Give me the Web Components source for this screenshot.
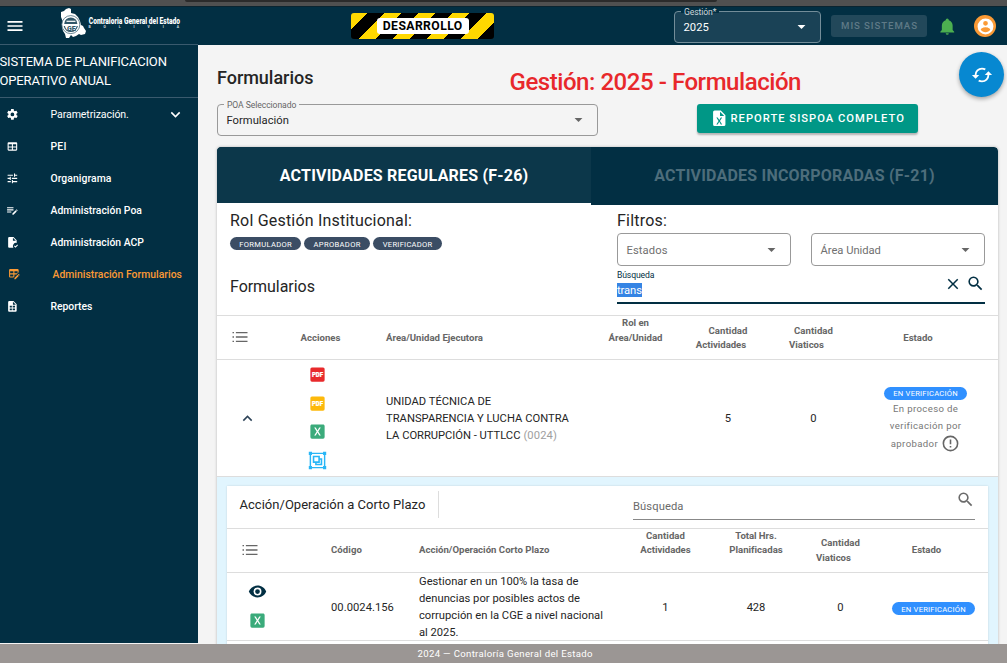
<!DOCTYPE html>
<html lang="es"><head><meta charset="utf-8"><title>Sistema de Planificacion Operativo Anual</title>
<style>html,body{margin:0;height:100%;overflow:hidden}body{font-family:Roboto,sans-serif;background:#f4f4f4}</style></head>
<body><poa-app></poa-app>
<script>
const ctx=document.createElement('canvas').getContext('2d');
function define(name,css,html,setup){
  customElements.define(name,class extends HTMLElement{
    constructor(){super();this.attachShadow({mode:'open'}).innerHTML='<style>*{box-sizing:border-box}:host{box-sizing:border-box}'+css+'</style>'+(typeof html==='function'?'':html);this.tpl=html;}
    connectedCallback(){if(this.ready)return;this.ready=true;
      if(typeof this.tpl==='function')this.shadowRoot.innerHTML+=this.tpl(this);
      if(setup)setup(this);}
  });
}
const P={
menu:'M3,6H21V8H3V6M3,11H21V13H3V11M3,16H21V18H3V16Z',
cog:'M12,15.5A3.5,3.5 0 0,1 8.5,12A3.5,3.5 0 0,1 12,8.5A3.5,3.5 0 0,1 15.5,12A3.5,3.5 0 0,1 12,15.5M19.43,12.97C19.47,12.65 19.5,12.33 19.5,12C19.5,11.67 19.47,11.34 19.43,11L21.54,9.37C21.73,9.22 21.78,8.95 21.66,8.73L19.66,5.27C19.54,5.05 19.27,4.96 19.05,5.05L16.56,6.05C16.04,5.66 15.5,5.32 14.87,5.07L14.5,2.42C14.46,2.18 14.25,2 14,2H10C9.75,2 9.54,2.18 9.5,2.42L9.13,5.07C8.5,5.32 7.96,5.66 7.44,6.05L4.95,5.05C4.73,4.96 4.46,5.05 4.34,5.27L2.34,8.73C2.21,8.95 2.27,9.22 2.46,9.37L4.57,11C4.53,11.34 4.5,11.67 4.5,12C4.5,12.33 4.53,12.65 4.57,12.97L2.46,14.63C2.27,14.78 2.21,15.05 2.34,15.27L4.34,18.73C4.46,18.95 4.73,19.03 4.95,18.95L7.44,17.94C7.96,18.34 8.5,18.68 9.13,18.93L9.5,21.58C9.54,21.82 9.75,22 10,22H14C14.25,22 14.46,21.82 14.5,21.58L14.87,18.93C15.5,18.67 16.04,18.34 16.56,17.94L19.05,18.95C19.27,19.03 19.54,18.95 19.66,18.73L21.66,15.27C21.78,15.05 21.73,14.78 21.54,14.63L19.43,12.97Z',
down:'M7.41,8.58L12,13.17L16.59,8.58L18,10L12,16L6,10L7.41,8.58Z',
up:'M7.41,15.41L12,10.83L16.59,15.41L18,14L12,8L6,14L7.41,15.41Z',
caret:'M7,10L12,15L17,10H7Z',
table:'M5,4H19A2,2 0 0,1 21,6V18A2,2 0 0,1 19,20H5A2,2 0 0,1 3,18V6A2,2 0 0,1 5,4M5,8V12H11V8H5M13,8V12H19V8H13M5,14V18H11V14H5M13,14V18H19V14H13Z',
tune:'M3,17V19H9V17H3M3,5V7H13V5H3M13,21V19H21V17H13V15H11V21H13M7,9V11H3V13H7V15H9V9H7M21,13V11H11V13H21M15,9H17V7H21V5H17V3H15V9Z',
playlist:'M2,6V8H14V6H2M2,10V12H14V10H2M20.04,10.13C19.9,10.13 19.76,10.19 19.65,10.3L18.65,11.3L20.7,13.35L21.7,12.35C21.92,12.14 21.92,11.79 21.7,11.58L20.42,10.3C20.31,10.19 20.18,10.13 20.04,10.13M18.07,11.88L12,17.94V20H14.06L20.12,13.93L18.07,11.88M2,14V16H10V14H2Z',
filecheck:'M14,2H6A2,2 0 0,0 4,4V20A2,2 0 0,0 6,22H13.8A6,6 0 0,1 20,13V8L14,2M13,9V3.5L18.5,9H13M17.75,22L15,19L16.16,17.84L17.75,19.43L21.34,15.84L22.5,17.25L17.75,22Z',
tableedit:'M21.7,13.35L20.7,14.35L18.65,12.3L19.65,11.3C19.86,11.08 20.21,11.08 20.42,11.3L21.7,12.58C21.92,12.79 21.92,13.14 21.7,13.35M12,18.94L18.07,12.88L20.12,14.93L14.06,21H12V18.94M4,2H18A2,2 0 0,1 20,4V8.17L16.17,12H12V16.17L10.17,18H4A2,2 0 0,1 2,16V4A2,2 0 0,1 4,2M4,6V10H10V6H4M12,6V10H18V6H12M4,12V16H10V12H4Z',
filetable:'M14,2H6A2,2 0 0,0 4,4V20A2,2 0 0,0 6,22H18A2,2 0 0,0 20,20V8L14,2M11,19H7V17H11V19M11,16H7V14H11V16M17,19H12.5V17H17V19M17,16H12.5V14H17V16M17,13H12.5V11H17V13M11,13H7V11H11V13M13,9V3.5L18.5,9H13Z',
bell:'M21,19V20H3V19L5,17V11C5,7.9 7.03,5.17 10,4.29C10,4.19 10,4.1 10,4A2,2 0 0,1 12,2A2,2 0 0,1 14,4C14,4.1 14,4.19 14,4.29C16.97,5.17 19,7.9 19,11V17L21,19M14,21A2,2 0 0,1 12,23A2,2 0 0,1 10,21',
account:'M12,19.2C9.5,19.2 7.29,17.92 6,16C6.03,14 10,12.9 12,12.9C14,12.9 17.97,14 18,16C16.71,17.92 14.5,19.2 12,19.2M12,5A3,3 0 0,1 15,8A3,3 0 0,1 12,11A3,3 0 0,1 9,8A3,3 0 0,1 12,5M12,2A10,10 0 0,0 2,12A10,10 0 0,0 12,22A10,10 0 0,0 22,12C22,6.47 17.5,2 12,2Z',
search:'M9.5,3A6.5,6.5 0 0,1 16,9.5C16,11.11 15.41,12.59 14.44,13.73L14.71,14H15.5L20.5,19L19,20.5L14,15.5V14.71L13.73,14.44C12.59,15.41 11.11,16 9.5,16A6.5,6.5 0 0,1 3,9.5A6.5,6.5 0 0,1 9.5,3M9.5,5C7,5 5,7 5,9.5C5,12 7,14 9.5,14C12,14 14,12 14,9.5C14,7 12,5 9.5,5Z',
close:'M19,6.41L17.59,5L12,10.59L6.41,5L5,6.41L10.59,12L5,17.59L6.41,19L12,13.41L17.59,19L19,17.59L13.41,12L19,6.41Z',
eye:'M12,9A3,3 0 0,0 9,12A3,3 0 0,0 12,15A3,3 0 0,0 15,12A3,3 0 0,0 12,9M12,17A5,5 0 0,1 7,12A5,5 0 0,1 12,7A5,5 0 0,1 17,12A5,5 0 0,1 12,17M12,4.5C7,4.5 2.73,7.61 1,12C2.73,16.39 7,19.5 12,19.5C17,19.5 21.27,16.39 23,12C21.27,7.61 17,4.5 12,4.5Z',
alert:'M11,15H13V17H11V15M11,7H13V13H11V7M12,2C6.47,2 2,6.5 2,12A10,10 0 0,0 12,22A10,10 0 0,0 22,12A10,10 0 0,0 12,2M12,20A8,8 0 0,1 4,12A8,8 0 0,1 12,4A8,8 0 0,1 20,12A8,8 0 0,1 12,20Z',
list:'M2,5.2H4V7H2V5.2M2,11.1H4V12.9H2V11.1M2,17H4V18.8H2V17M6.5,5.2H22V7H6.5V5.2M6.5,11.1H22V12.9H6.5V11.1M6.5,17H22V18.8H6.5V17Z',
cached:'M19,8L15,12H18A6,6 0 0,1 12,18C11,18 10.03,17.75 9.2,17.3L7.74,18.76C8.97,19.54 10.43,20 12,20A8,8 0 0,0 20,12H23M6,12A6,6 0 0,1 12,6C13,6 13.97,6.25 14.8,6.7L16.26,5.24C15.03,4.46 13.57,4 12,4A8,8 0 0,0 4,12H1L5,16L9,12',
excelfile:'M14,2H6A2,2 0 0,0 4,4V20A2,2 0 0,0 6,22H18A2,2 0 0,0 20,20V8L14,2M15.8,20H14L12,16.6L10,20H8.2L11.1,15.5L8.2,11H10L12,14.4L14,11H15.8L12.9,15.5L15.8,20M13,9V3.5L18.5,9H13Z',
excel:'M16.2,17H14.2L12,13.2L9.8,17H7.8L11,12L7.8,7H9.8L12,10.8L14.2,7H16.2L13,12M19,3H5C3.89,3 3,3.89 3,5V19A2,2 0 0,0 5,21H19A2,2 0 0,0 21,19V5C21,3.89 20.1,3 19,3Z'};
const X={
pdf:'<rect x="3" y="3" width="18" height="18" rx="2"/><text x="12" y="14.8" fill="#fff" font-family="Roboto" font-weight="900" font-size="8" text-anchor="middle" stroke="#fff" stroke-width=".3" textLength="14" lengthAdjust="spacingAndGlyphs">PDF</text>',
group:'<g fill="none" stroke="currentColor" stroke-width="1.8"><path d="M3,3H21V21H3Z"/><path d="M7,7H14V14H7ZM14,10H17V17H10V14" stroke-width="2"/></g><path d="M1,1H5V5H1ZM19,1H23V5H19ZM1,19H5V23H1ZM19,19H23V23H19Z"/>'};
// One drawing from the icon set
define('ui-icon',':host{display:block;flex:none}svg{display:block;fill:currentColor}',e=>{const n=e.getAttribute('name'),s=e.getAttribute('size')||24;
 return `<svg width="${s}" height="${s}" viewBox="0 0 24 24">${X[n]||`<path fill-rule="evenodd" d="${P[n]}"/>`}</svg>`});
// A single line of text, tracked to the width given in w
define('ui-text',':host{display:inline-block;white-space:nowrap;flex:none}','<slot></slot>',e=>{
 const s=e.getAttribute('s')||11.2,wt=e.getAttribute('b')||400,w=+e.getAttribute('w')-.6,t=e.textContent;
 e.style.fontSize=s+'px';e.style.fontWeight=wt;
 if(w>0){ctx.font=`${wt} ${s}px Roboto`;const ls=(w-ctx.measureText(t).width)/Math.max(1,t.length-1);e.style.letterSpacing=ls.toFixed(3)+'px';e.style.marginRight=(-ls).toFixed(3)+'px';}
});
define('ui-chip',':host{display:flex;height:13px;border-radius:7px;justify-content:center;color:#fff;background:var(--chip,#3b4d64);flex:none;font-size:0}span{display:block;line-height:13px;padding-top:var(--drop,.6px)}','<span><slot></slot></span>');
define('ui-select',`:host{display:block;position:relative;border:1px solid var(--line,#999);border-radius:4px;color:#252525}
.in{height:100%;display:flex;align-items:center;justify-content:space-between;padding:0 9px 0 8.5px}.in div{font-size:0;line-height:16px;padding-top:5px}
.lb{position:absolute;left:6px;top:-5px;line-height:10px;font-size:0;padding:0 3px;color:var(--label,#666);background:var(--bg,#f4f4f4)}ui-icon{color:var(--caret,#666);margin-top:-1px}`,
 '<div class="in"><div><slot></slot></div><ui-icon name="caret" size="19"></ui-icon></div><div class="lb"><slot name="label"></slot></div>');
define('cge-logo',':host{display:block;width:122px;height:34px}svg{display:block;overflow:visible}',`<svg width="122" height="34" viewBox="0 0 122 34">
<path fill="#fff" d="M2 5L5 4L7 2L10 1L12 2L12 6L16 7L19 10L21 14L22 18L24 19L25 21L27 24L26 27L22 28L20 27L17 29L14 30L12 28L10 31L7 31L6 27L4 24L3 20L4 15L2 10Z"/>
<circle cx="11.8" cy="17.6" r="9" fill="#fff" stroke="#45697a" stroke-width=".8"/><path d="M5.2 17A6.6 6.6 0 0 1 18.4 17Z" fill="#315769"/><path d="M7.5 14.3H16.5" stroke="#fff" stroke-width="1.2"/><path d="M5.3 19A6.6 6.6 0 0 0 18.3 19" fill="none" stroke="#315769" stroke-width="1.3"/>
<text x="12.3" y="23.6" text-anchor="middle" font-family="Roboto" font-size="7" font-weight="900" fill="#315769">GE</text>
<text x="29.8" y="16.7" font-family="Roboto" font-size="9.6" font-weight="900" fill="#fff" textLength="91.2" lengthAdjust="spacingAndGlyphs">Contraloria General del Estado</text>
<text fill="#c7d2d8" font-family="Roboto" font-size="3.4" font-weight="900" x="29.5" y="21" textLength="90.5">BOLIVIA</text></svg>`);
define('top-bar',`:host{display:flex;height:39px;background:#022f43;color:#fff;align-items:flex-start;border-top:1px solid #0a2430}
.menu{margin:9px 0 0 5px}cge-logo{margin:0 0 0 34px}
.dev{margin:6px 0 0 170px;width:143px;height:26px;border-radius:3px;background:repeating-linear-gradient(-45deg,#000 0 12px,#ffd800 12px 24px);display:flex;justify-content:center;align-items:center}
.dev div{background:#fff;color:#000;width:92px;height:16px;border-radius:3px;line-height:16px;text-align:center;font-size:0}
ui-select{width:147px;height:32px;margin:4px 0 0 180px;background:#1a4256;color:#fff;--line:#738d99;--label:#d0d8dc;--bg:linear-gradient(#022f43 50%,#1a4256 50%);--caret:#fff}
.mis{margin:8px 0 0 10px;width:96px;height:22px;border-radius:3px;background:#22485a;color:#5f7a87;line-height:21.5px;text-align:center;font-size:0}
.bell{margin:10px 0 0 11px;color:#4caf50}.ac{margin:8px 0 0 17.5px;width:22px;height:22px;border-radius:50%;background:#fb9a35;display:grid;place-items:center}`,
`<ui-icon class="menu" name="menu" size="20"></ui-icon><cge-logo></cge-logo><div class="dev"><div><ui-text s="12.2" b="700" w="80">DESARROLLO</ui-text></div></div>
<ui-select><ui-text w="26">2025</ui-text><ui-text slot="label" s="8.6" w="33">Gestión*</ui-text></ui-select><div class="mis"><ui-text s="9.6" b="500" w="76.5">MIS SISTEMAS</ui-text></div>
<ui-icon class="bell" name="bell" size="18.5"></ui-icon><div class="ac"><ui-icon name="account" size="19"></ui-icon></div>`);
define('side-item',':host{display:flex;align-items:center;height:32px;padding-left:6px}ui-icon{width:44.5px}:host([active]){color:#fb9a35;padding-left:8px}.more{width:auto;margin-left:auto;margin-right:13px}',
 e=>`<ui-icon name="${e.getAttribute('icon')}" size="12.8"></ui-icon><slot></slot>${e.hasAttribute('more')?'<ui-icon class="more" name="down" size="19"></ui-icon>':''}`);
define('side-nav',`:host{display:block;background:#022f43;color:#fff;overflow:hidden}.t{height:54px;border:1px solid #3a5a6e;border-width:1px 0;padding-top:7px;line-height:19px}.t ui-text{display:block;margin-left:-.5px}`,
`<div class="t"><ui-text s="13" w="168">SISTEMA DE PLANIFICACION</ui-text><ui-text s="13" w="112">OPERATIVO ANUAL</ui-text></div>
<side-item icon="cog" more><ui-text s="10.6" w="79">Parametrización.</ui-text></side-item>
<side-item icon="table"><ui-text s="10.4" b="500" w="16.5">PEI</ui-text></side-item>
<side-item icon="tune"><ui-text s="10.4" b="500" w="61.5">Organigrama</ui-text></side-item>
<side-item icon="playlist"><ui-text s="10.4" b="500" w="92">Administración Poa</ui-text></side-item>
<side-item icon="filecheck"><ui-text s="10.4" b="500" w="94">Administración ACP</ui-text></side-item>
<side-item icon="tableedit" active><ui-text s="10.4" b="500" w="130">Administración Formularios</ui-text></side-item>
<side-item icon="filetable"><ui-text s="10.4" b="500" w="42.5">Reportes</ui-text></side-item>`);
define('page-head',`:host{display:grid;grid-template-columns:381px 1fr;height:102px;color:#252525}.l h1{margin:0;font:inherit;line-height:24px;height:59px;padding-top:21px}
ui-select{height:32px}.r{display:flex;flex-direction:column}.r .g{color:#e8282b;line-height:30px;height:30px;margin:22px 0 0 -88.5px}
.btn{margin:7px 0 0 99px;width:221px;height:29px;border-radius:3px;background:#009786;color:#fff;display:flex;align-items:center;padding-left:13px;gap:2px;box-shadow:0 2px 2px #0004}`,
`<div class="l"><h1><ui-text s="18" b="500" w="97">Formularios</ui-text></h1><ui-select><ui-text w="63">Formulación</ui-text><ui-text slot="label" s="8.6" w="70">POA Seleccionado</ui-text></ui-select></div>
<div class="r"><div class="g"><ui-text s="24" b="500" w="292.5">Gestión: 2025 - Formulación</ui-text></div><div class="btn"><ui-icon name="excelfile" size="18.5"></ui-icon><ui-text s="11.2" b="500" w="174">REPORTE SISPOA COMPLETO</ui-text></div></div>`);
define('form-tabs',`:host{display:grid;grid-template-columns:374px 1fr;grid-template-rows:58px;height:58px;background:#022f43;line-height:57px;text-align:center;border-radius:4px 4px 0 0;overflow:hidden}
.a{color:#fff;background:#0c374a;border-bottom:2px solid #fff;height:58px}.b{color:#4d6d7b}`,
`<div class="a"><ui-text s="16" b="700" w="249">ACTIVIDADES REGULARES (F-26)</ui-text></div><div class="b"><ui-text s="16" b="700" w="281">ACTIVIDADES INCORPORADAS (F-21)</ui-text></div>`);
define('form-filters',`:host{display:grid;grid-template-columns:387px 368px;height:111px;padding-left:13px;border-bottom:1px solid #ddd;color:#252525}
.h{line-height:20px;padding-top:6px;height:28px}.chips{display:flex;gap:3px;padding-top:4px;--drop:1.2px}.f{line-height:20px;margin-top:26.5px}
.s{display:grid;grid-template-columns:174px 174px;gap:20px}.s ui-select{height:33px;color:#707070;--bg:none}
.q{margin-top:3px;height:35px;border-bottom:2px solid #022f43;display:flex;gap:4px;color:#022f43;font-size:0}.q>div{flex:1}.lb{line-height:13px;height:11px}.v{height:14px;margin-top:3px}.v span{display:block;background:#3584e4;color:#fff;height:14px;line-height:15px;width:25px}.q ui-icon{margin-top:5.5px}`,
`<div><div class="h"><ui-text s="16" w="182.5">Rol Gestión Institucional:</ui-text></div><div class="chips"><ui-chip style="width:71px"><ui-text s="7.6" w="53">FORMULADOR</ui-text></ui-chip><ui-chip style="width:66px"><ui-text s="7.6" w="47.5">APROBADOR</ui-text></ui-chip><ui-chip style="width:69px"><ui-text s="7.6" w="50">VERIFICADOR</ui-text></ui-chip></div><div class="f"><ui-text s="16" w="85.5">Formularios</ui-text></div></div>
<div><div class="h"><ui-text s="16" w="50.5">Filtros:</ui-text></div><div class="s"><ui-select><ui-text w="41.5">Estados</ui-text></ui-select><ui-select><ui-text w="61">Área Unidad</ui-text></ui-select></div>
<div class="q"><div><div class="lb"><ui-text s="8.6" w="38">Búsqueda</ui-text></div><div class="v"><span><ui-text w="25.5">trans</ui-text></span></div></div><ui-icon name="close" size="18"></ui-icon><ui-icon name="search" size="19" style="margin-top:5px"></ui-icon></div></div>`);
const tcss=`.th,.tr{display:grid;border-bottom:1px solid #ddd;align-items:center;justify-items:center}.th{height:44px;color:#666;line-height:14px}.tr{color:#252525;line-height:17px}
.c{display:flex;flex-direction:column;align-items:center}.l{justify-self:start}.sub{margin-left:-14px}`;
define('action-detail',tcss+`:host{display:block;background:#fff;box-shadow:0 0 2px #0002;flex:1}.top{display:grid;grid-template-columns:211px 1fr;height:43px;border-bottom:1px solid #ddd;color:#252525}
.t{border-right:1px solid #ddd;height:27px;margin-top:5px;width:212px;padding-left:12.5px;line-height:26px}.s{margin-left:195px;width:342px;height:34px;border-bottom:1px solid #888;display:flex;justify-content:space-between;color:#6a6a6a;line-height:15px;padding:12.5px 0 0}
.s ui-icon{margin-top:-8.5px}
.th,.tr{grid-template-columns:60px 28px 88px 216px 93px 88px 81px 107px}.i{display:flex;flex-direction:column;gap:10px;align-items:center}`,
`<div class="top"><div class="t"><ui-text s="13" w="186.5">Acción/Operación a Corto Plazo</ui-text></div><div class="s"><ui-text w="51">Búsqueda</ui-text><ui-icon name="search" size="19"></ui-icon></div></div>
<div class="th" style="padding-bottom:1.5px"><ui-icon name="list" size="18" style="margin-right:15px"></ui-icon><i></i><ui-text class="l" s="9.6" b="700" w="31.5" style="margin-left:16px">Código</ui-text><ui-text class="l" s="9.6" b="700" w="131" style="margin-left:16px">Acción/Operación Corto Plazo</ui-text>
<div class="c" style="margin-top:-14px"><ui-text s="9.6" b="700" w="39.5">Cantidad</ui-text><ui-text s="9.6" b="700" w="51">Actividades</ui-text></div><div class="c" style="margin-top:-14px"><ui-text s="9.6" b="700" w="42">Total Hrs.</ui-text><ui-text s="9.6" b="700" w="54">Planificadas</ui-text></div>
<div class="c" style="line-height:15px"><ui-text s="9.6" b="700" w="39.5">Cantidad</ui-text><ui-text class="sub" s="9.6" b="700" w="35.5">Viaticos</ui-text></div><ui-text s="9.6" b="700" w="30" style="margin-left:-16px">Estado</ui-text></div>
<div class="tr" style="height:68px"><div class="i" style="margin-top:-3px"><ui-icon name="eye" size="19" style="color:#022f43"></ui-icon><ui-icon name="excel" size="19" style="color:#3bab7b"></ui-icon></div><i></i><ui-text class="l" w="63.5" style="margin-left:16px">00.0024.156</ui-text>
<div class="c l" style="align-items:start;margin-left:16px"><ui-text w="160">Gestionar en un 100% la tasa de</ui-text><ui-text w="161.5">denuncias por posibles actos de</ui-text><ui-text w="184.5">corrupción en la CGE a nivel nacional</ui-text><ui-text w="40">al 2025.</ui-text></div>
<ui-text>1</ui-text><ui-text w="19">428</ui-text><ui-text>0</ui-text><ui-chip style="--chip:#3090ff;--drop:1.2px;width:83px;margin:2px 2px 0 0"><ui-text s="7.6" w="65">EN VERIFICACIÓN</ui-text></ui-chip></div>`);
define('forms-table',tcss+`:host{display:flex;flex-direction:column;flex:1}.th,.tr{grid-template-columns:61px 81px 234px 85px 100px 71px 149px}.ic{display:flex;flex-direction:column;gap:9.6px;margin:-1px 2px 0 0}
.x{flex:1;background:#e1f5fe;padding:9px 10px 0;display:flex}.st{color:#777}.st ui-chip{--chip:#3090ff}.ap{display:flex;align-items:center;gap:3.5px;height:19px}`,
`<div class="th"><ui-icon name="list" size="18" style="margin:0 16px 1px 0"></ui-icon><ui-text s="9.6" b="700" w="40.5" style="margin-left:4px">Acciones</ui-text><ui-text class="l" s="9.6" b="700" w="97.5" style="margin-left:27px">Área/Unidad Ejecutora</ui-text>
<div class="c" style="margin-top:-15.5px;line-height:15px"><ui-text s="9.6" b="700" w="27.5">Rol en</ui-text><ui-text s="9.6" b="700" w="54.5">Área/Unidad</ui-text></div><div class="c"><ui-text s="9.6" b="700" w="39.5">Cantidad</ui-text><ui-text class="sub" s="9.6" b="700" w="51">Actividades</ui-text></div><div class="c"><ui-text s="9.6" b="700" w="39.5">Cantidad</ui-text><ui-text class="sub" s="9.6" b="700" w="35.5">Viaticos</ui-text></div><ui-text s="9.6" b="700" w="30" style="margin-left:-11px">Estado</ui-text></div>
<div class="tr" style="height:117px"><ui-icon name="up" size="19" style="color:#2c4257;margin-right:1px"></ui-icon><div class="ic"><ui-icon name="pdf" size="19" style="color:#e82a2c"></ui-icon><ui-icon name="pdf" size="19" style="color:#fdb90b"></ui-icon><ui-icon name="excel" size="19" style="color:#3bab7b"></ui-icon><ui-icon name="group" size="19" style="color:#29b6f6"></ui-icon></div>
<div class="c l" style="align-items:start;margin-left:27px;padding-top:1px"><ui-text w="106">UNIDAD TÉCNICA DE</ui-text><ui-text w="183.5">TRANSPARENCIA Y LUCHA CONTRA</ui-text><div style="display:flex;gap:3px"><ui-text w="135">LA CORRUPCIÓN - UTTLCC</ui-text> <ui-text w="34" style="color:#9e9e9e">(0024)</ui-text></div></div><i></i><ui-text>5</ui-text><ui-text>0</ui-text>
<div class="c st" style="margin:3px 0 0 4px"><ui-chip style="width:83px"><ui-text s="7.6" w="65">EN VERIFICACIÓN</ui-text></ui-chip><ui-text s="9.6" w="65.5">En proceso de</ui-text><ui-text s="9.6" w="71.5">verificación por</ui-text><div class="ap"><ui-text s="9.6" w="47.5">aprobador</ui-text><ui-icon name="alert" size="19" style="color:#666"></ui-icon></div></div></div>
<div class="x"><action-detail></action-detail></div>`);
define('forms-card',':host{display:flex;flex-direction:column;height:520px;background:#fff;border-radius:4px;box-shadow:0 0 3px #0004;width:781px;overflow:hidden;flex:none}','<form-tabs></form-tabs><form-filters></form-filters><forms-table></forms-table>');
define('poa-app',`:host{display:grid;grid-template-rows:6px 39px 599px 19px;height:663px;width:1007px;overflow:hidden;position:relative}
.strip{background:#505050;overflow:hidden}.strip div{margin-left:185px;width:532px;height:2px;background:#2b2b2b;border-radius:0 0 2px 2px}
.body{display:grid;grid-template-columns:198px 1fr;overflow:hidden;margin-top:-1px;height:600px}side-nav{height:599px}main{padding:1px 0 0 19px;overflow:hidden;background:linear-gradient(#022f43 1px,#f4f4f4 1px)}
footer{background:#9b9694;color:#fff;text-align:center;line-height:16px;padding-left:3px;z-index:1}
.fab{position:absolute;left:959px;top:52px;width:45px;height:45px;border-radius:50%;background:#0788d1;color:#fff;display:grid;place-items:center;box-shadow:0 2px 4px #0005}`,
`<div class="strip"><div></div></div><top-bar></top-bar><div class="body"><side-nav></side-nav><main><page-head></page-head><forms-card></forms-card></main></div>
<footer><ui-text s="9.6" w="175.5">2024 — Contraloría General del Estado</ui-text></footer><div class="fab"><ui-icon name="cached" size="22"></ui-icon></div>`);
</script></body></html>
